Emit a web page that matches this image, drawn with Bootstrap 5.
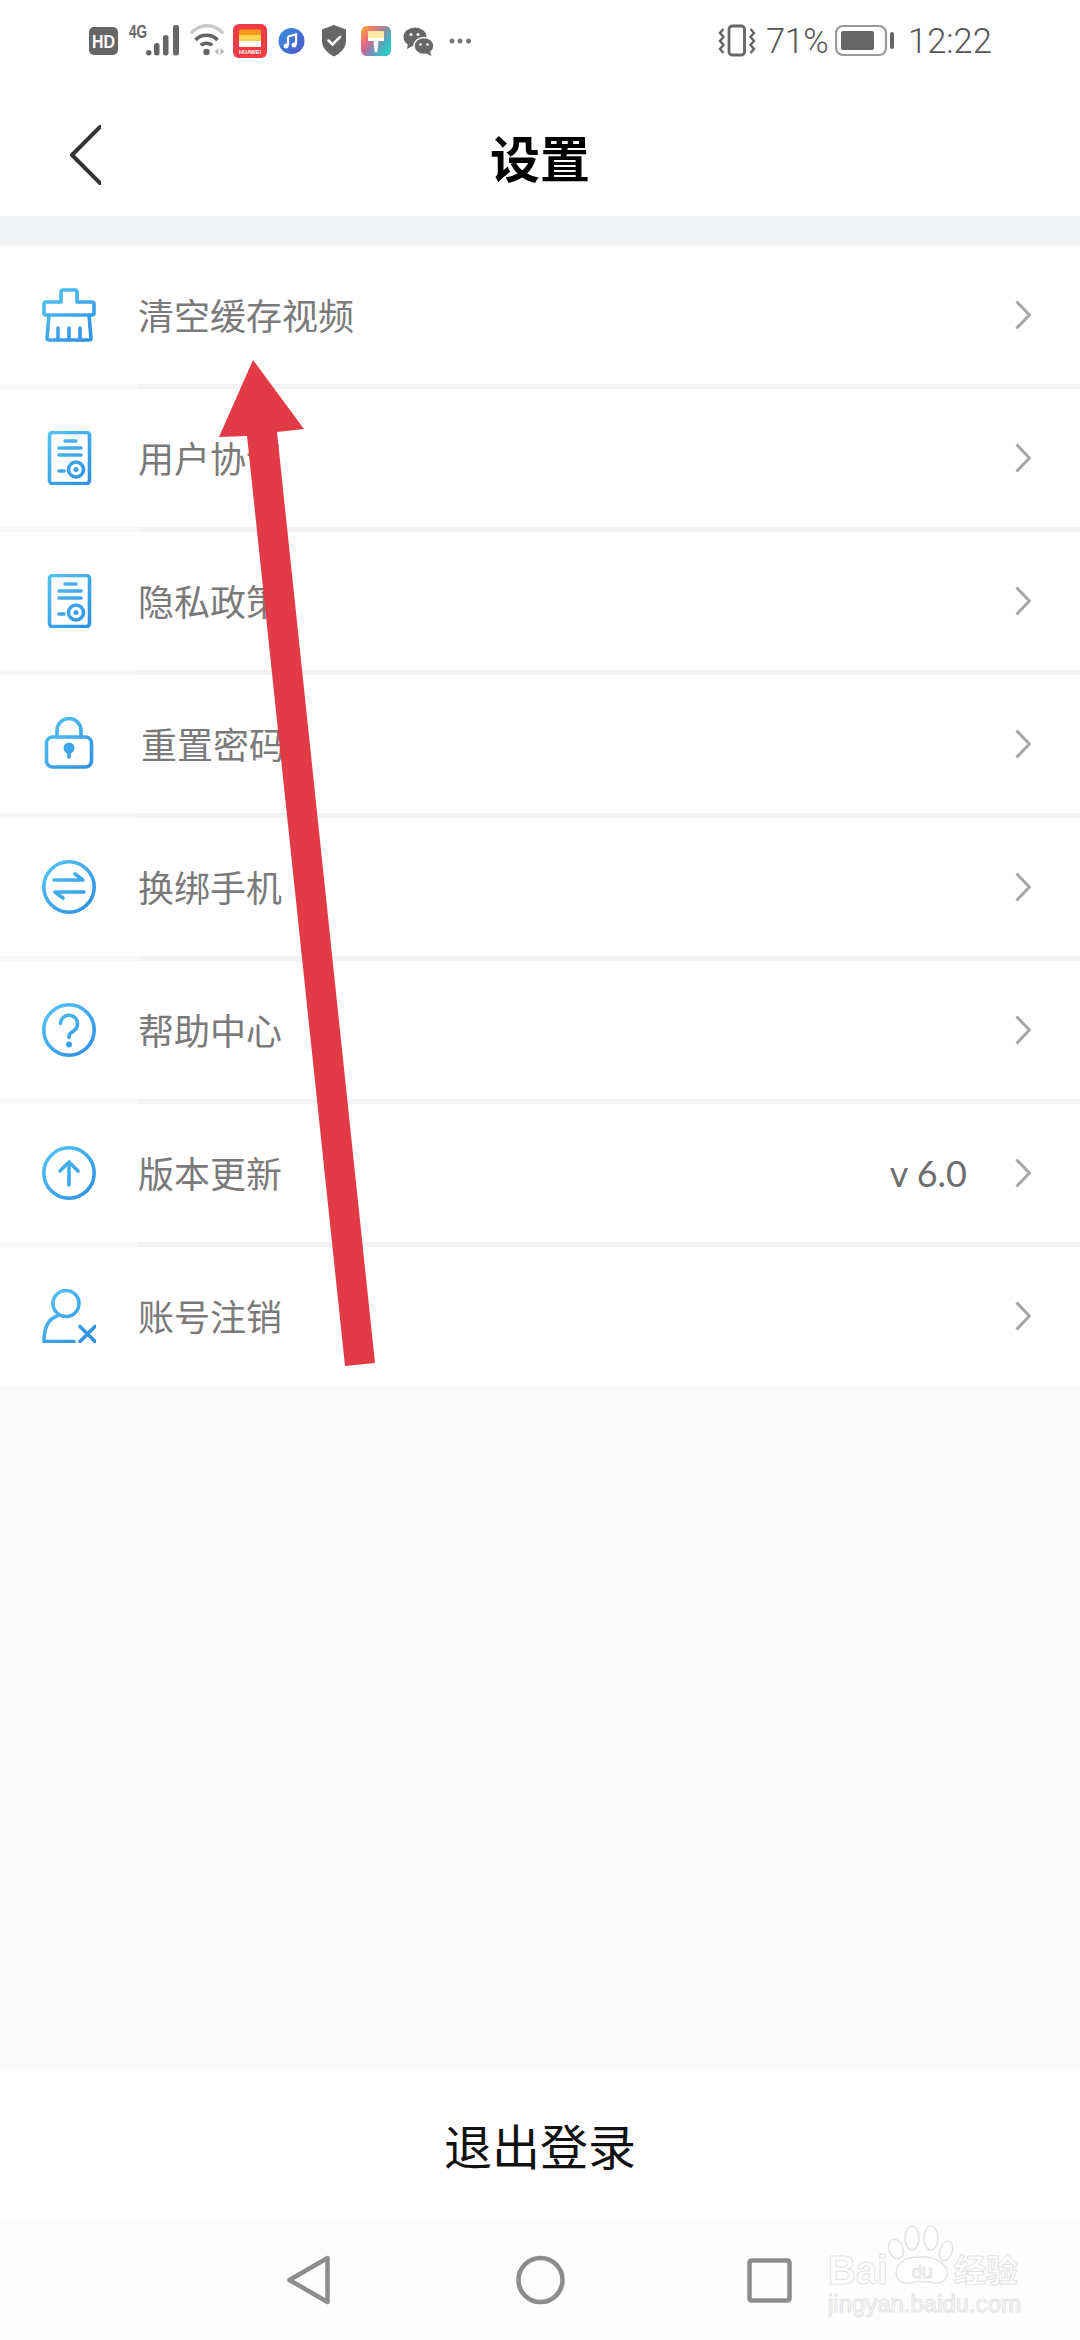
<!DOCTYPE html>
<html lang="zh-CN">
<head>
<meta charset="utf-8">
<title>设置</title>
<link href="https://cdn.jsdelivr.net/npm/bootstrap@5.3.0/dist/css/bootstrap.min.css" rel="stylesheet">
<style>
html,body{margin:0;padding:0}
body{width:1080px;height:2340px;overflow:hidden;background:#fafafa;font-family:"Noto Sans CJK SC","Noto Sans",sans-serif}
.screen{width:1080px;height:2340px}
.status-area{height:98px;padding:0 0 16px 89px;background:#fff;color:#666}
.status-area svg{flex:none;display:block}
.m7{margin-left:7px}.m10{margin-left:10px}.m11{margin-left:11px}.m12{margin-left:12px}.m14{margin-left:14px}.m15{margin-left:15px}.m16{margin-left:16px}.m247{margin-left:247px}
.status-text{font-family:Roboto,"Liberation Sans",sans-serif;font-size:34.5px;line-height:40px;font-weight:300;color:#555;white-space:nowrap}
.pct{margin-left:10px;width:59px;letter-spacing:-.5px;margin-right:10px}
.clock{margin-left:14px}
.title-bar{height:118px;background:#fff}
.back-btn{left:69px;top:27px}
.page-title{font-size:50px;font-weight:700;color:#000;line-height:1;padding-bottom:3px}
.band{height:30px;background:#f2f3f5}
.setting-list{border-radius:0;gap:5px;background:linear-gradient(to right,#f8f8f9 138px,#f2f3f5 138px)}
.setting-list .list-group-item{height:138px;padding:0 30px 0 42px;border:0;background:#fff;color:#7a7a7a;font-size:36px;line-height:1;display:flex;align-items:center}
.row-icon{width:54px;height:54px;flex:none;margin-right:42px}
.row-icon *{fill:none;stroke:url(#blueGrad);stroke-width:3.6;stroke-linecap:round;stroke-linejoin:round}
.row-icon .solid{fill:url(#blueGrad);stroke:none}
.row-label{flex:1;padding-bottom:2px}
.shift{padding-left:3px}
.row-value{font-family:Lato,"Open Sans",sans-serif;font-size:36px;color:#6e6e6e;margin-right:48px}
.row-chev{width:16px;height:30px;flex:none;margin-right:19px}
.logout-box{height:152px;background:#fff;font-size:48px;color:#111}
.system-nav{height:120px;background:#fdfdfd;padding-left:287px}
.gap-186{margin-left:186px}.gap-182{margin-left:182px}
.arrow-layer{left:0;top:0;pointer-events:none}
.watermark{left:828px;top:2225px}
</style>
</head>
<body>
<svg width="0" height="0" class="position-absolute">
  <defs>
    <linearGradient id="blueGrad" gradientUnits="userSpaceOnUse" x1="4" y1="2" x2="50" y2="52">
      <stop offset="0" stop-color="#54c4f3"/><stop offset="1" stop-color="#2d8fe3"/>
    </linearGradient>
    <linearGradient id="paintGrad" x1="0" y1="0" x2="1" y2="1">
      <stop offset="0" stop-color="#f2b233"/><stop offset=".4" stop-color="#f0588a"/><stop offset=".7" stop-color="#9a55dc"/><stop offset="1" stop-color="#3f8ee8"/>
    </linearGradient>
    <linearGradient id="paintTop" x1="0" y1="0" x2="1" y2=".6">
      <stop offset=".3" stop-color="#49c98e" stop-opacity="0"/><stop offset="1" stop-color="#2ec9c0"/>
    </linearGradient>
    <linearGradient id="musicGrad" x1="0" y1="0" x2="1" y2="1">
      <stop offset="0" stop-color="#3b8fe0"/><stop offset="1" stop-color="#4a55c8"/>
    </linearGradient>
  </defs>
</svg>

<div class="screen position-relative d-flex flex-column">
  <div class="status-area d-flex align-items-center">
    <svg width="29" height="40"><rect y="6" width="29" height="28" rx="5" fill="#666"/><text x="14.5" y="26.5" text-anchor="middle" font-family="Liberation Sans" font-weight="700" font-size="19" textLength="23" lengthAdjust="spacingAndGlyphs" fill="#fff">HD</text></svg>
    <svg class="m11" width="50" height="40" fill="#666"><text x="0" y="17" font-family="Liberation Sans" font-weight="700" font-size="19" textLength="18" lengthAdjust="spacingAndGlyphs">4G</text><rect x="17" y="29" width="5.500" height="5.500" rx="2.700"/><rect x="25" y="22" width="5.500" height="12.500" rx="2.500"/><rect x="34" y="14" width="5.500" height="20.500" rx="2.500"/><rect x="44" y="4" width="6" height="30.500" rx="2.500"/></svg>
    <svg class="m10" width="37" height="40" fill="none"><path d="M2 12.500C10 2 26 2 34 12.500" stroke="#c9c9c9" stroke-width="3.500"/><path d="M6.500 19C12 12.500 23 12.500 28.500 19" stroke="#666" stroke-width="3.500"/><path d="M12 24.500C14.500 21.500 20.500 21.500 23 24.500" stroke="#666" stroke-width="3.500"/><circle cx="17.500" cy="31" r="3.200" fill="#666"/><path d="M29.500 27v7l-4-3.500zM31.500 27v7l4-3.500z" fill="#bcbcbc"/></svg>
    <svg class="m7" width="34" height="40"><rect y="3" width="34" height="34" rx="6" fill="#ee3b46"/><rect x="6" y="8.500" width="22" height="6" rx="1.500" fill="#f39a1f"/><rect x="6" y="14" width="22" height="6" fill="#fbd34d"/><rect x="6" y="20" width="22" height="6" fill="#fff"/><text x="17" y="33" text-anchor="middle" font-family="Liberation Sans" font-weight="700" font-size="5.500" fill="#fff">HUAWEI</text></svg>
    <svg class="m11" width="27" height="40"><circle cx="13.500" cy="20" r="13" fill="url(#musicGrad)"/><path d="M10 15.500l8-2v10" fill="none" stroke="#fff" stroke-width="2.200"/><path d="M10 15.500v9" fill="none" stroke="#fff" stroke-width="2.200"/><circle cx="8" cy="25" r="2.500" fill="#fff"/><circle cx="16" cy="24" r="2.500" fill="#fff"/></svg>
    <svg class="m16" width="26" height="40"><path d="M13 4L25 8.500V20C25 28 18 33 13 35.500C8 33 1 28 1 20V8.500Z" fill="#666"/><path d="M7.500 19.500L11.500 23.500L19 16" fill="none" stroke="#fff" stroke-width="2.500" stroke-linecap="round"/></svg>
    <svg class="m14" width="30" height="40"><rect y="5" width="30" height="30" rx="6" fill="url(#paintGrad)"/><rect y="5" width="30" height="30" rx="6" fill="url(#paintTop)"/><rect x="7" y="10" width="16" height="10" rx="1" fill="#fdeaa6"/><rect x="7" y="17" width="16" height="3" fill="#fff"/><path d="M12.500 20h5l-1 10a1.500 1.500 0 0 1-3 0z" fill="#fff"/></svg>
    <svg class="m12" width="31" height="40" fill="#666"><ellipse cx="12" cy="16" rx="11.500" ry="9.500"/><path d="M5 22l-1 6 7-4z"/><ellipse cx="21" cy="25" rx="10" ry="8.500" stroke="#fff" stroke-width="1.500"/><path d="M27 31l1.500 4-6-3z"/><circle cx="8" cy="13.500" r="1.500" fill="#fff"/><circle cx="15" cy="13.500" r="1.500" fill="#fff"/><circle cx="17.500" cy="23.500" r="1.300" fill="#fff"/><circle cx="24.500" cy="23.500" r="1.300" fill="#fff"/></svg>
    <svg class="m15" width="22" height="40" fill="#777"><circle cx="3" cy="20" r="2.500"/><circle cx="11" cy="20" r="2.500"/><circle cx="19.500" cy="20" r="2.500"/></svg>
    <svg class="m247" width="38" height="40" fill="none" stroke="#666"><rect x="11" y="5" width="15.500" height="29" rx="3" stroke-width="2.800"/><path d="M5.500 8L2 12L5.500 16L2 20L5.500 24L2 28L5.500 32" stroke-width="2.400"/><path d="M32.500 8L36 12L32.500 16L36 20L32.500 24L36 28L32.500 32" stroke-width="2.400"/></svg>
    <span class="status-text pct">71%</span>
    <svg width="59" height="40"><rect x="1" y="5" width="50" height="29" rx="7" fill="none" stroke="#999" stroke-width="2.200"/><rect x="6" y="10" width="33" height="19" rx="2" fill="#666"/><rect x="55" y="11" width="4" height="17" rx="2" fill="#666"/></svg>
    <span class="status-text clock">12:22</span>
  </div>

  <div class="title-bar position-relative d-flex align-items-center justify-content-center">
    <svg class="back-btn position-absolute" width="32" height="60" fill="none" stroke="#333" stroke-width="4" stroke-linecap="round" stroke-linejoin="round"><path d="M31 2L3 30L31 58"/></svg>
    <span class="page-title">设置</span>
  </div>
  <div class="band"></div>

  <div class="list-group setting-list">
    <div class="list-group-item">
      <svg class="row-icon" viewBox="0 0 54 54"><path d="M19 14V4Q19 2 21 2H33Q35 2 35 4V14H50Q52 14 52 16V25Q52 27 50 27H4Q2 27 2 25V16Q2 14 4 14Z"/><path d="M7 27L5 50Q5 52 7 52H47Q49 52 49 50L47 27"/><path d="M16 40V52M27 40V52M38 40V52"/></svg>
      <span class="row-label">清空缓存视频</span>
      <svg class="row-chev" viewBox="0 0 16 30"><path d="M1.500 1.500L14.500 15L1.500 28.500" fill="none" stroke="#a6a6a6" stroke-width="3"/></svg>
    </div>
    <div class="list-group-item">
      <svg class="row-icon" viewBox="0 0 54 54"><rect x="7.500" y="1.500" width="40" height="51" rx="3"/><path d="M23 10H34M17 17H39M17 24H39M17 40H22"/><circle cx="34" cy="38.500" r="7.500"/><circle class="solid" cx="34" cy="38.500" r="2.500"/></svg>
      <span class="row-label">用户协议</span>
      <svg class="row-chev" viewBox="0 0 16 30"><path d="M1.500 1.500L14.500 15L1.500 28.500" fill="none" stroke="#a6a6a6" stroke-width="3"/></svg>
    </div>
    <div class="list-group-item">
      <svg class="row-icon" viewBox="0 0 54 54"><rect x="7.500" y="1.500" width="40" height="51" rx="3"/><path d="M23 10H34M17 17H39M17 24H39M17 40H22"/><circle cx="34" cy="38.500" r="7.500"/><circle class="solid" cx="34" cy="38.500" r="2.500"/></svg>
      <span class="row-label">隐私政策</span>
      <svg class="row-chev" viewBox="0 0 16 30"><path d="M1.500 1.500L14.500 15L1.500 28.500" fill="none" stroke="#a6a6a6" stroke-width="3"/></svg>
    </div>
    <div class="list-group-item">
      <svg class="row-icon" viewBox="0 0 54 54"><rect x="4.500" y="20" width="45" height="30" rx="6"/><path d="M15 20V13.500a12 12 0 0 1 24 0V20"/><circle class="solid" cx="27" cy="31" r="5.500"/><path d="M27 33V40"/></svg>
      <span class="row-label shift">重置密码</span>
      <svg class="row-chev" viewBox="0 0 16 30"><path d="M1.500 1.500L14.500 15L1.500 28.500" fill="none" stroke="#a6a6a6" stroke-width="3"/></svg>
    </div>
    <div class="list-group-item">
      <svg class="row-icon" viewBox="0 0 54 54"><circle cx="27" cy="27" r="25.200"/><path d="M12 20H41L33 14"/><path d="M42 32H13L21 38"/></svg>
      <span class="row-label">换绑手机</span>
      <svg class="row-chev" viewBox="0 0 16 30"><path d="M1.500 1.500L14.500 15L1.500 28.500" fill="none" stroke="#a6a6a6" stroke-width="3"/></svg>
    </div>
    <div class="list-group-item">
      <svg class="row-icon" viewBox="0 0 54 54"><circle cx="27" cy="27" r="25.200"/><path d="M18.500 20.500a8.500 8.500 0 1 1 13 7.500c-3 2-4.500 3-4.500 6.500"/><circle class="solid" cx="27" cy="41.500" r="3"/></svg>
      <span class="row-label">帮助中心</span>
      <svg class="row-chev" viewBox="0 0 16 30"><path d="M1.500 1.500L14.500 15L1.500 28.500" fill="none" stroke="#a6a6a6" stroke-width="3"/></svg>
    </div>
    <div class="list-group-item">
      <svg class="row-icon" viewBox="0 0 54 54"><circle cx="27" cy="27" r="25.200"/><path d="M27 39V16M18 25L27 16L36 25"/></svg>
      <span class="row-label">版本更新</span>
      <span class="row-value">v 6.0</span>
      <svg class="row-chev" viewBox="0 0 16 30"><path d="M1.500 1.500L14.500 15L1.500 28.500" fill="none" stroke="#a6a6a6" stroke-width="3"/></svg>
    </div>
    <div class="list-group-item">
      <svg class="row-icon" viewBox="0 0 54 54"><circle cx="24" cy="14.500" r="13"/><path d="M15 27C6 30 2 40 2 52.500H32"/><path d="M38 37.500L53 52.500M53 37.500L38 52.500"/></svg>
      <span class="row-label">账号注销</span>
      <svg class="row-chev" viewBox="0 0 16 30"><path d="M1.500 1.500L14.500 15L1.500 28.500" fill="none" stroke="#a6a6a6" stroke-width="3"/></svg>
    </div>
  </div>

  <div class="flex-grow-1"></div>

  <div class="logout-box d-flex align-items-center justify-content-center">退出登录</div>
  <div class="system-nav d-flex align-items-center">
    <svg width="43" height="50" fill="none" stroke="#8c8c8c" stroke-width="4.500" stroke-linejoin="round"><path d="M40.500 3L2.500 25L40.500 47Z"/></svg>
    <svg class="gap-186" width="49" height="50" fill="none" stroke="#8c8c8c" stroke-width="4.500"><circle cx="24.500" cy="25" r="22"/></svg>
    <svg class="gap-182" width="45" height="45" fill="none" stroke="#8c8c8c" stroke-width="4.500"><rect x="2.500" y="2.500" width="40" height="40" rx="2"/></svg>
  </div>

  <svg class="watermark position-absolute" width="194" height="100" fill="#fff" stroke="#e3e3e3">
    <text x="0" y="59" font-family="Liberation Sans" font-weight="700" font-size="40" textLength="60" lengthAdjust="spacingAndGlyphs" stroke-width="1">Bai</text>
    <path d="M69 43C74 32 85 32 94 32C103 32 114 34 119 45C121 55 113 59 106 58C98 56 90 56 82 58C72 60 66 52 69 43Z" stroke-width="1.500"/>
    <ellipse cx="68" cy="24" rx="7" ry="10" stroke-width="1.500" transform="rotate(-20 68 24)"/>
    <ellipse cx="84" cy="13" rx="7" ry="12" stroke-width="1.500"/>
    <ellipse cx="103" cy="13" rx="7" ry="12" stroke-width="1.500"/>
    <ellipse cx="118" cy="26" rx="6" ry="10" stroke-width="1.500" transform="rotate(20 118 26)"/>
    <text x="94" y="53" text-anchor="middle" font-family="Liberation Sans" font-size="19" stroke-width="1">du</text>
    <text x="126" y="57" font-family="Noto Sans CJK SC" font-weight="700" font-size="32" stroke-width="1">经验</text>
    <text x="0" y="87" font-family="Liberation Sans" font-size="23" textLength="193" lengthAdjust="spacingAndGlyphs" stroke-width="1">jingyan.baidu.com</text>
  </svg>

  <svg class="arrow-layer position-absolute" width="1080" height="1400" viewBox="0 0 1080 1400">
    <polygon points="253,360 304,429 277,432 375,1363 345,1366 247,436 219,437" fill="#e23a47"/>
  </svg>
</div>
<script src="https://cdn.jsdelivr.net/npm/bootstrap@5.3.0/dist/js/bootstrap.bundle.min.js"></script>
</body>
</html>
